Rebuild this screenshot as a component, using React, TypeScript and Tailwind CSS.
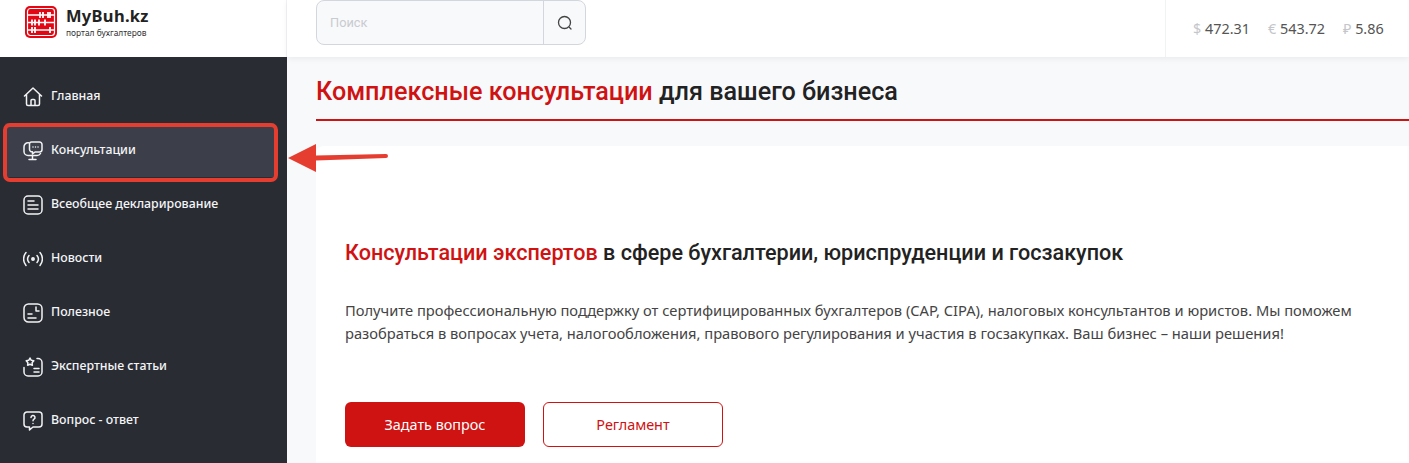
import React from "react";

const stroke = { fill: "none", stroke: "currentColor", strokeWidth: 1.5, strokeLinecap: "round" as const, strokeLinejoin: "round" as const };

const Ico = ({ children }: { children: React.ReactNode }) => (
  <svg width="20" height="20" viewBox="0 0 20 20" {...stroke} className="mt-[2px] shrink-0 text-[#f1f2f4]">{children}</svg>
);

const items: { label: string; active?: boolean; icon: React.ReactNode }[] = [
  { label: "Главная", icon: <Ico><path d="M1.500 9 10 1l8.500 8M3.500 7.500V17a1.500 1.500 0 0 0 1.500 1.500h10a1.500 1.500 0 0 0 1.500-1.500V7.500M8 18.500V13.500a1 1 0 0 1 1-1h2a1 1 0 0 1 1 1v5" /></Ico> },
  { label: "Консультации", active: true, icon: <Ico><path d="M5.500 1.800A4 4 0 0 0 1 6v4.500a4 4 0 0 0 4 4h9a4 4 0 0 0 3.500-2M9.500 14.500v4M6 18.500h7" /><path d="M8.500 1h8A2.500 2.500 0 0 1 19 3.500v5a2.500 2.500 0 0 1-2.500 2.500H12l-2.500 2v-2.200A2.500 2.500 0 0 1 6.500 8.500V3a2 2 0 0 1 2-2Z" /><path d="M10 6h.01M12.500 6h.01M15 6h.01" /></Ico> },
  { label: "Всеобщее декларирование", icon: <Ico><rect x="1" y="1" width="18" height="18" rx="4" /><path d="M5 6h6M5 10h10M5 14h10" /></Ico> },
  { label: "Новости", icon: <Ico><circle cx="10" cy="10" r="1.200" fill="currentColor" /><path d="M6 6.500a5.500 5.500 0 0 0 0 7M14 6.500a5.500 5.500 0 0 1 0 7M3 3.500a10 10 0 0 0 0 13M17 3.500a10 10 0 0 1 0 13" /></Ico> },
  { label: "Полезное", icon: <Ico><rect x="1" y="1" width="18" height="18" rx="4.500" /><path d="M13 4v4h3M5 11h4M5 15h8" /></Ico> },
  { label: "Экспертные статьи", icon: <Ico><path d="m7 1 1.300 2.300 2.500.5-1.700 1.900.3 2.600L7 7.200 4.600 8.300l.3-2.600L3.200 3.800l2.500-.5Z" /><path d="M14 1.500h1a4 4 0 0 1 4 4V15a4 4 0 0 1-4 4H5a4 4 0 0 1-4-4v-4.500M11 11.500h5M11 15h5" /></Ico> },
  { label: "Вопрос - ответ", icon: <Ico><path d="M4 1h12a3 3 0 0 1 3 3v9a3 3 0 0 1-3 3h-6l-3.500 3v-3H4a3 3 0 0 1-3-3V4a3 3 0 0 1 3-3Z" /><path d="M8 6.500a2 2 0 1 1 3 1.700c-.7.400-1 .8-1 1.500M10 12.500h.01" /></Ico> },
];

const Logo = () => (
  <svg width="32" height="32" viewBox="0 0 32 32" className="shrink-0">
    <rect x="0" y="0" width="32" height="32" rx="5" fill="#e30613" />
    <rect x="2.500" y="2.500" width="27" height="27" rx="3" fill="none" stroke="#fff" strokeWidth="1.200" />
    <path d="M3 9h26M3 16.500h26M3 24h26" stroke="#fff" strokeWidth="1.300" />
    <path d="M15 6v6M18 6v6M23 6v6M25 6v6M7 13.500v6M10 13.500v6M14 13.500v6M20 13.500v6M7 21v6M10 21v6M25 21v6" stroke="#fff" strokeWidth="1.800" />
  </svg>
);

export default function App() {
  return (
    <div className="relative flex h-[463px] w-[1409px] overflow-hidden bg-[#f8f9fb] font-['Noto_Sans',sans-serif]">
      <aside className="flex w-[287px] shrink-0 flex-col">
        <div className="flex h-[57px] items-start gap-[9px] border-r border-[#f1f2f4] bg-white pl-[25px] pt-[6px]">
          <Logo />
          <div>
            <div className="text-[16.500px] font-bold leading-[20px] tracking-[0.3px] text-[#222]">MyBuh.kz</div>
            <div className="mt-[1px] text-[8.400px] leading-[12px] text-[#333]">портал бухгалтеров</div>
          </div>
        </div>
        <nav className="flex flex-1 flex-col bg-[#292c33] pt-[12px]">
          {items.map((it) => (
            <div key={it.label} className={`ml-[5px] mr-[12px] flex h-[54px] items-center gap-[8px] rounded-[2px] pl-[18px] text-[12.350px] font-medium text-[#f4f5f7] ${it.active ? "bg-[#3c3f49]" : ""}`}>
              {it.icon}
              <span>{it.label}</span>
            </div>
          ))}
        </nav>
      </aside>

      <div className="flex min-w-0 flex-1 flex-col">
        <header className="relative z-10 flex h-[57px] shrink-0 items-start justify-between bg-white pl-[29px] shadow-[0_2px_6px_rgba(0,0,0,0.06)]">
          <div className="flex h-[45px] w-[270px] rounded-[8px] border border-[#d3d6dc] bg-[#f8f9fb]">
            <div className="flex flex-1 items-center pl-[13px] font-['Roboto',sans-serif] text-[12.800px] text-[#c9cbd0]">Поиск</div>
            <div className="flex w-[42px] items-center justify-center border-l border-[#d3d6dc] text-[#444]">
              <svg width="16" height="16" viewBox="0 0 16 16" fill="none" stroke="currentColor" strokeWidth="1.300" strokeLinecap="round">
                <circle cx="7.500" cy="7.500" r="6" />
                <path d="m12.500 12.500 1.500 1.500" />
              </svg>
            </div>
          </div>
          <div className="flex h-[57px] w-[244px] items-center gap-[18px] border-l border-[#f1f2f4] pl-[27px] text-[14.400px] text-[#555]">
            <span><span className="text-[#c4c6ca]">$</span> 472.31</span>
            <span><span className="text-[#c4c6ca]">€</span> 543.72</span>
            <span><span className="text-[#c4c6ca]">₽</span> 5.86</span>
          </div>
        </header>

        <main className="flex-1 pl-[29px]">
          <div className="flex h-[64px] items-center border-b-2 border-[#cf1212] pt-[8px] font-['Roboto',sans-serif] text-[25.200px] font-medium text-[#222]">
            <h1><span className="text-[#cf1212]">Комплексные консультации</span> для вашего бизнеса</h1>
          </div>
          <section className="mt-[25px] h-[400px] rounded-tl-[8px] bg-white pl-[29px] pt-[93px]">
            <h2 className="font-['Roboto',sans-serif] text-[21.600px] font-medium leading-[28px] text-[#222]">
              <span className="text-[#cf1212]">Консультации экспертов</span> в сфере бухгалтерии, юриспруденции и госзакупок
            </h2>
            <p className="mt-[32px] w-[1040px] text-[14.700px] leading-[23px] text-[#444]">
              Получите профессиональную поддержку от сертифицированных бухгалтеров (CAP, CIPA), налоговых консультантов и юристов. Мы поможем разобраться в вопросах учета, налогообложения, правового регулирования и участия в госзакупках. Ваш бизнес – наши решения!
            </p>
            <div className="mt-[57px] flex gap-[18px] text-[14.400px]">
              <button className="flex h-[45px] w-[180px] items-center justify-center rounded-[6px] bg-[#cf1212] text-white">Задать вопрос</button>
              <button className="flex h-[45px] w-[180px] items-center justify-center rounded-[6px] border border-[#cf1212] bg-white text-[#cf1212]">Регламент</button>
            </div>
          </section>
        </main>
      </div>

      <div className="pointer-events-none absolute left-[3px] top-[123px] h-[59px] w-[275px] rounded-[7px] border-[4px] border-[#e53e30]" />
      <svg className="pointer-events-none absolute left-[285px] top-[140px]" width="106" height="36" viewBox="0 0 106 36">
        <path d="M3 18 31 4v11.500l70-1.500a2 2 0 0 1 0 4L31 20.500V32Z" fill="#e53e30" />
      </svg>
    </div>
  );
}
